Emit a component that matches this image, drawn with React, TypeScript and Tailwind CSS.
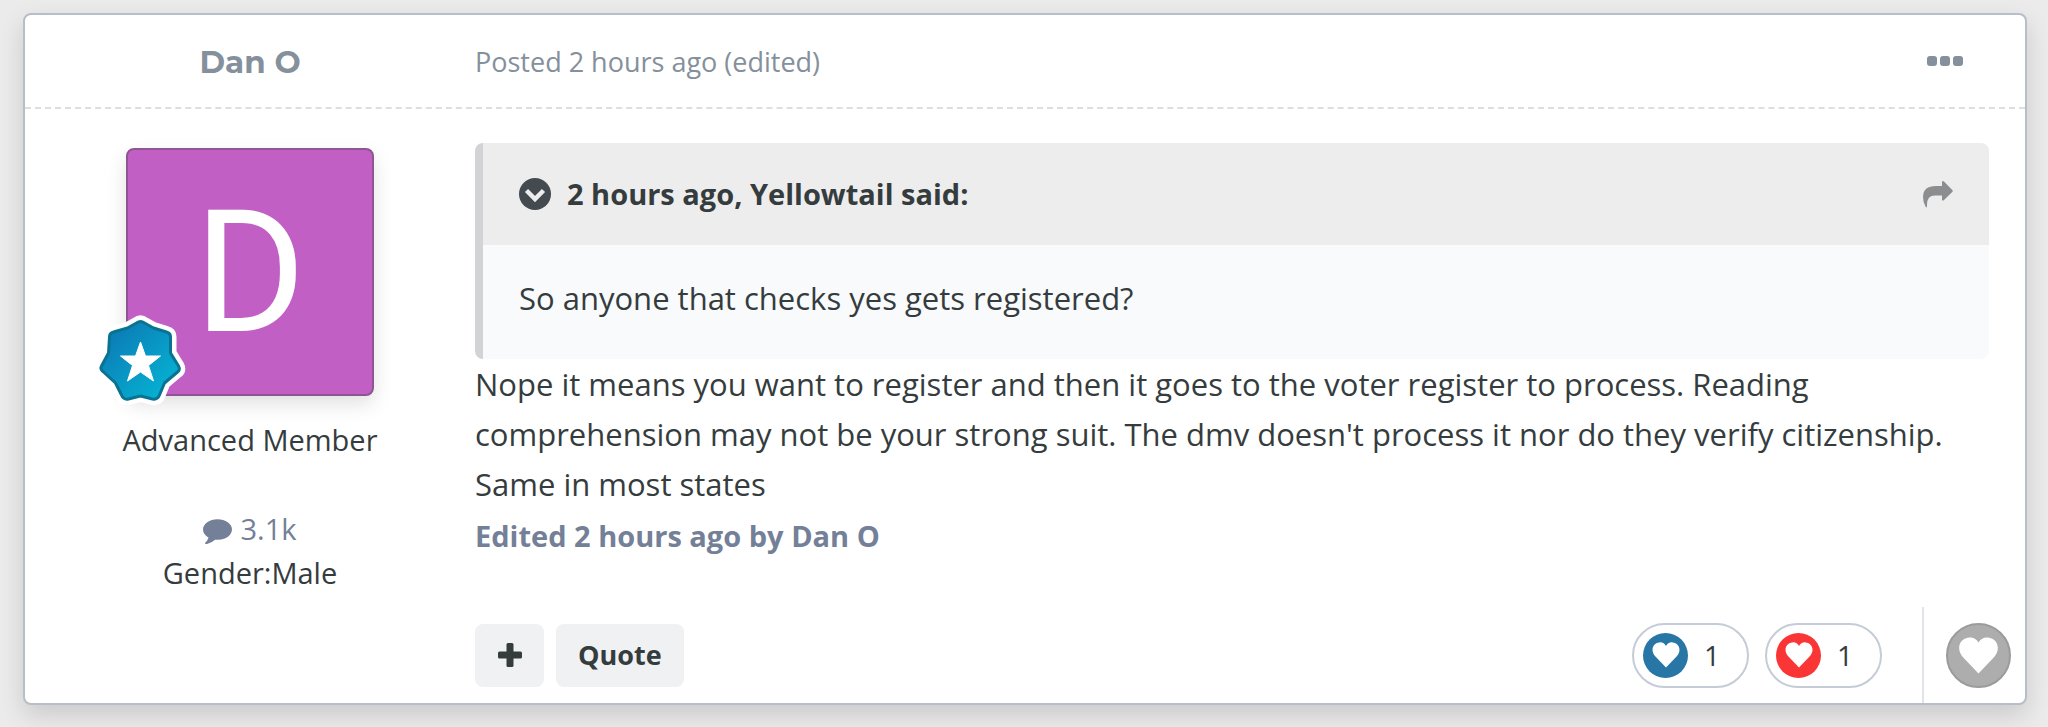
const HEART =
  "M50 92 L14 54 C-2 37 4 10 28 8 C38 7 46 12 50 20 C54 12 62 7 72 8 C96 10 102 37 86 54 Z";

const BADGE =
  "M42 16 Q46 13 50 16 L59 21 L72 25 Q76 26 76 30 L76 46 L84 59 Q86 63 83 65 L70 76 L65 88 Q63 93 58 92 L46 89 L34 92 Q29 93 27 88 L21 76 L9 65 Q5 62 7 59 L14 46 L15 30 Q15 26 19 25 L33 21 Z";

function Heart({ className }: { className: string }) {
  return (
    <svg viewBox="0 0 100 100" className={className} aria-hidden="true">
      <path d={HEART} fill="#fff" />
    </svg>
  );
}

function CommentIcon() {
  return (
    <svg viewBox="0 0 1792 1792" className="size-[29px]" fill="currentColor" aria-hidden="true">
      <path d="M1792 896q0 174-120 321.500t-326 233-450 85.500q-70 0-145-8-198 175-460 242-49 14-114 22-17 2-30.500-9t-17.500-29v-1q-3-4-.5-12t2-10 4.500-9.500l6-9 7-8.500 8-9q7-8 31-34.500t34.500-38 31-39.500 32.500-51 27-59 26-76q-157-89-247.500-220t-90.500-281q0-130 71-248.500t191-204.500 286-136.500 348-50.500 348 50.500 286 136.500 191 204.500 71 248.500z" />
    </svg>
  );
}

function ChevronCircle() {
  return (
    <svg viewBox="0 0 32 32" className="size-8" aria-hidden="true">
      <circle cx="16" cy="16" r="16" fill="#444b50" />
      <path d="M7.500 12.500 L16 21 L24.500 12.500" fill="none" stroke="#ededed" strokeWidth="4.500" />
    </svg>
  );
}

function ShareArrow() {
  return (
    <svg viewBox="0 0 30 27" className="h-[27px] w-[30px]" aria-hidden="true">
      <path
        d="M19 1 Q19 0 20 0 Q20.500 0 21 .5 L29.500 9.300 Q30 10 29.500 10.700 L21 19 Q19 20.500 19 18.500 L19 14.500 L12 14.500 Q3.500 14.500 4 25 Q3.800 27.500 2.500 25.500 Q0 21 0 16 Q0 5 13 5 L19 5 Z"
        fill="#8b8d8e"
      />
    </svg>
  );
}

function RankBadge() {
  return (
    <svg viewBox="0 0 100 105" className="absolute -bottom-4 -left-8 h-[105px] w-[101px]" aria-hidden="true">
      <defs>
        <linearGradient id="rank" x1="0" y1="0" x2="1" y2="1">
          <stop offset="0.1" stopColor="#0b7ab5" />
          <stop offset="0.9" stopColor="#06b3d3" />
        </linearGradient>
      </defs>
      <path d={BADGE} fill="#fff" stroke="#fff" strokeWidth="12" strokeLinejoin="round" />
      <path d={BADGE} fill="url(#rank)" stroke="#0a7391" strokeWidth="3" strokeLinejoin="round" />
      <path
        d="M46 35 L51 49 L66 49 L54 58.500 L59 74 L46 65 L33 74 L38 58.500 L26 49 L41 49 Z"
        fill="#fff"
        stroke="#fff"
        strokeLinejoin="round"
      />
    </svg>
  );
}

function Reaction({ name, color, count }: { name: string; color: string; count: number }) {
  return (
    <button
      type="button"
      aria-label={`${name}: ${count}`}
      className="flex h-[65px] w-[117px] items-center gap-4 rounded-full border-2 border-[#c5ccd6] pl-[9px] text-[28px] text-[#353c41]"
    >
      <span className={`flex size-[45px] items-center justify-center rounded-full ${color}`}>
        <Heart className="size-[30px]" />
      </span>
      <span>{count}</span>
    </button>
  );
}

export default function App() {
  return (
    <div className="min-h-screen bg-[#ebebeb] pt-[13px] pr-[21px] pb-5 pl-[23px] font-['Open_Sans',sans-serif] text-[#353c3e]">
      <article className="rounded-lg border-2 border-[#b7bec8] bg-white shadow-[0_10px_24px_rgba(0,0,0,0.14)]">
        <header className="flex h-[94px] items-center border-b-2 border-dashed border-[#dedede] text-[#84909b]">
          <h3 className="w-[450px] pt-0.5 text-center font-['Montserrat','Inter',sans-serif] text-[31px] font-bold">
            <a href="#author">Dan O</a>
          </h3>
          <a href="#post" className="pt-0.5 text-[27px]">Posted 2 hours ago (edited)</a>
          <button type="button" aria-label="More options" className="mr-[62px] ml-auto flex gap-[3px]">
            <span className="size-[10px] rounded-[3px] bg-[#84909b]" />
            <span className="size-[10px] rounded-[3px] bg-[#84909b]" />
            <span className="size-[10px] rounded-[3px] bg-[#84909b]" />
          </button>
        </header>

        <div className="flex">
          <aside className="flex w-[450px] shrink-0 flex-col items-center pt-[39px] text-[29px] leading-[44px]">
            <div className="relative">
              <a
                href="#profile"
                className="flex size-[248px] items-center justify-center rounded-lg border-2 border-[#8f5593] bg-[#c15fc4] pt-0.5 font-['Roboto',sans-serif] text-[170px] leading-none text-white shadow-[0_8px_20px_rgba(0,0,0,0.12)]"
              >
                D
              </a>
              <RankBadge />
            </div>
            <p className="mt-[22px]">Advanced Member</p>
            <a href="#posts" className="mt-[45px] flex items-center gap-2 text-[#748097]">
              <CommentIcon />
              3.1k
            </a>
            <p>Gender:Male</p>
          </aside>

          <div className="flex min-w-0 grow flex-col">
            <div className="pt-[34px] pr-9 text-[31px] leading-[50px]">
              <blockquote className="overflow-hidden rounded-lg border-l-8 border-[#d1d3d5] bg-[#f9fafc]">
                <div className="flex h-[102px] items-center bg-[#ededed] pr-9 pl-9 text-[29px] font-bold">
                  <button type="button" aria-label="Toggle quote" className="mr-4">
                    <ChevronCircle />
                  </button>
                  2 hours ago, Yellowtail said:
                  <a href="#quoted" aria-label="Go to quoted post" className="ml-auto">
                    <ShareArrow />
                  </a>
                </div>
                <p className="px-9 pt-7 pb-9">So anyone that checks yes gets registered?</p>
              </blockquote>
              <p>
                Nope it means you want to register and then it goes to the voter register to process. Reading
                comprehension may not be your strong suit. The dmv doesn't process it nor do they verify citizenship.
                Same in most states
              </p>
              <p className="mt-0.5 text-[29px] font-bold text-[#748097]">Edited 2 hours ago by Dan O</p>
            </div>
            <footer className="mt-[46px] flex h-24 items-center">
              <div className="flex gap-3 text-[27px] font-bold">
                <button type="button" aria-label="Multi-quote" className="flex h-[63px] w-[69px] items-center justify-center rounded-lg bg-[#f0f1f3]">
                  <svg viewBox="0 0 24 24" className="size-6" fill="currentColor" aria-hidden="true">
                    <rect x="8.500" y="0" width="7" height="24" rx="1.500" />
                    <rect x="0" y="8.500" width="24" height="7" rx="1.500" />
                  </svg>
                </button>
                <button type="button" className="h-[63px] rounded-lg bg-[#f0f1f3] px-[22px]">Quote</button>
              </div>
              <div className="mr-10 ml-auto flex gap-4">
                <Reaction name="Like" color="bg-[#2876a6]" count={1} />
                <Reaction name="Love" color="bg-[#fa3535]" count={1} />
              </div>
              <div className="flex h-full items-center border-l-2 border-[#e0e3e9] pr-[14px] pl-[22px]">
                <button type="button" aria-label="React" className="flex size-[65px] items-center justify-center rounded-full border-2 border-[#9b9b9b] bg-[#adadad]">
                  <Heart className="size-[43px]" />
                </button>
              </div>
            </footer>
          </div>
        </div>
      </article>
    </div>
  );
}
